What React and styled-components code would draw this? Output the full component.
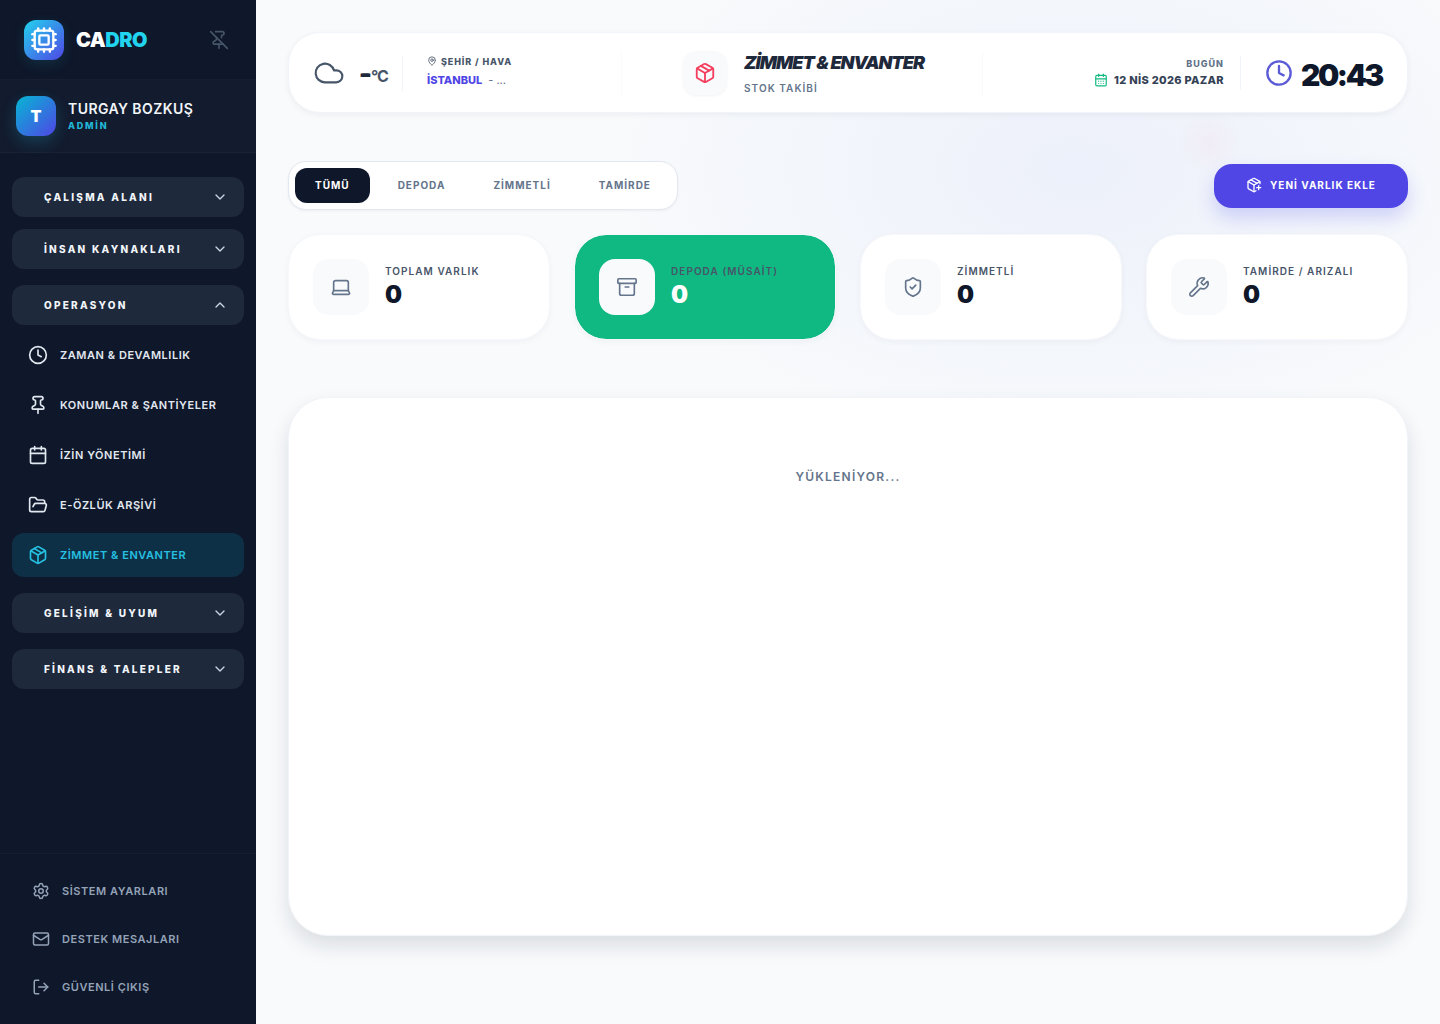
import React from 'react'
import styled, { createGlobalStyle } from 'styled-components'
import {
  Archive, Calendar, CalendarDays, ChevronDown, ChevronUp, Clock, Cloud, Cpu, FolderOpen, Laptop,
  LogOut, Mail, MapPin, Package, PackagePlus, Pin, PinOff, Settings, ShieldCheck, Wrench,
} from 'lucide-react'

const GlobalStyle = createGlobalStyle`
  * { box-sizing: border-box; }
  html, body { margin: 0; padding: 0; }
  body { font-family: Inter, "Noto Sans", sans-serif; background: #f8fafc; }
`

const opsItems = [
  { label: 'ZAMAN & DEVAMLILIK', icon: Clock },
  { label: 'KONUMLAR & ŞANTİYELER', icon: Pin },
  { label: 'İZİN YÖNETİMİ', icon: Calendar },
  { label: 'E-ÖZLÜK ARŞİVİ', icon: FolderOpen },
]

const footerItems = [
  { label: 'SİSTEM AYARLARI', icon: Settings },
  { label: 'DESTEK MESAJLARI', icon: Mail },
  { label: 'GÜVENLİ ÇIKIŞ', icon: LogOut },
]

const stats = [
  { label: 'TOPLAM VARLIK', icon: Laptop },
  { label: 'DEPODA (MÜSAİT)', icon: Archive, active: true },
  { label: 'ZİMMETLİ', icon: ShieldCheck },
  { label: 'TAMİRDE / ARIZALI', icon: Wrench },
]

const Group = ({ label, open }) => (
  <GroupButton>
    <span>{label}</span>
    {open ? <ChevronUp size={16} /> : <ChevronDown size={16} />}
  </GroupButton>
)

const App = () => (
  <Page>
    <GlobalStyle />
    <Sidebar>
      <Brand>
        <LogoBox><Cpu size={28} strokeWidth={2} /></LogoBox>
        <BrandName>CA<em>DRO</em></BrandName>
        <PinButton><PinOff size={20} /></PinButton>
      </Brand>
      <UserBox>
        <Avatar>T</Avatar>
        <div>
          <UserName>TURGAY BOZKUŞ</UserName>
          <UserRole>ADMİN</UserRole>
        </div>
      </UserBox>
      <Nav>
        <Group label="ÇALIŞMA ALANI" />
        <Group label="İNSAN KAYNAKLARI" />
        <OpenGroup>
          <Group label="OPERASYON" open />
          <SubList>
            {opsItems.map(({ label, icon: Icon }) => (
              <NavItem key={label}><Icon size={20} />{label}</NavItem>
            ))}
            <NavItem active><Package size={20} />ZİMMET & ENVANTER</NavItem>
          </SubList>
        </OpenGroup>
        <Group label="GELİŞİM & UYUM" />
        <LastGroup><Group label="FİNANS & TALEPLER" /></LastGroup>
      </Nav>
      <SideFooter>
        {footerItems.map(({ label, icon: Icon }) => (
          <FooterItem key={label}><Icon size={18} />{label}</FooterItem>
        ))}
      </SideFooter>
    </Sidebar>

    <Main>
      <TopBar>
        <WeatherBlock>
          <Cloud size={32} strokeWidth={1.6} color="#475569" />
          <Temp><b>--</b>°C</Temp>
          <CityBox>
            <CityLabel><MapPin size={10} />ŞEHİR / HAVA</CityLabel>
            <CityValue><b>İSTANBUL</b><span>- ...</span></CityValue>
          </CityBox>
        </WeatherBlock>
        <TitleBlock>
          <TitleIcon><Package size={22} /></TitleIcon>
          <div>
            <PageTitle>ZİMMET & ENVANTER</PageTitle>
            <PageSub>STOK TAKİBİ</PageSub>
          </div>
        </TitleBlock>
        <DateBlock>
          <DateBox>
            <DateLabel>BUGÜN</DateLabel>
            <DateValue><CalendarDays size={14} color="#10b981" />12 NİS 2026 PAZAR</DateValue>
          </DateBox>
          <ClockBox>
            <Clock size={28} color="#5b5bd6" strokeWidth={2} />
            <Time>20:43</Time>
          </ClockBox>
        </DateBlock>
      </TopBar>

      <ToolRow>
        <Tabs>
          <Tab active>TÜMÜ</Tab>
          <Tab>DEPODA</Tab>
          <Tab>ZİMMETLİ</Tab>
          <Tab>TAMİRDE</Tab>
        </Tabs>
        <AddButton><PackagePlus size={16} />YENİ VARLIK EKLE</AddButton>
      </ToolRow>

      <StatGrid>
        {stats.map(({ label, icon: Icon, active }) => (
          <StatCard key={label} active={active}>
            <StatIcon><Icon size={22} strokeWidth={1.8} /></StatIcon>
            <StatText>
              <StatLabel>{label}</StatLabel>
              <StatValue active={active}>0</StatValue>
            </StatText>
          </StatCard>
        ))}
      </StatGrid>

      <Panel>YÜKLENİYOR...</Panel>
    </Main>
  </Page>
)

export default App

const Page = styled.div`
  display: flex;
  min-height: 1024px;
`

const Sidebar = styled.aside`
  width: 256px;
  flex-shrink: 0;
  height: 1024px;
  background: #0f172a;
  display: flex;
  flex-direction: column;
`

const Brand = styled.div`
  height: 80px;
  padding: 0 24px;
  display: flex;
  align-items: center;
  gap: 12px;
  border-bottom: 1px solid rgba(255, 255, 255, 0.03);
`

const LogoBox = styled.div`
  width: 40px;
  height: 40px;
  border-radius: 12px;
  color: #fff;
  background: linear-gradient(135deg, #22d3ee, #4f46e5);
  box-shadow: 0 4px 14px rgba(34, 211, 238, 0.12);
  display: flex;
  align-items: center;
  justify-content: center;
`

const BrandName = styled.div`
  font-size: 20px;
  font-weight: 900;
  letter-spacing: -0.5px;
  color: #fff;

  em {
    font-style: normal;
    color: #22d3ee;
  }
`

const PinButton = styled.div`
  margin-left: auto;
  margin-right: 3px;
  color: #475569;
  display: flex;
`

const UserBox = styled.div`
  height: 73px;
  padding: 0 16px;
  display: flex;
  align-items: center;
  gap: 12px;
  background: rgba(255, 255, 255, 0.02);
  border-bottom: 1px solid rgba(255, 255, 255, 0.03);
`

const Avatar = styled.div`
  width: 40px;
  height: 40px;
  border-radius: 12px;
  color: #fff;
  font-size: 16px;
  font-weight: 900;
  background: linear-gradient(135deg, #06b6d4, #4f46e5);
  box-shadow: 0 6px 16px rgba(34, 211, 238, 0.2);
  display: flex;
  align-items: center;
  justify-content: center;
`

const UserName = styled.div`
  margin-top: 1px;
  font-size: 14px;
  font-weight: 600;
  letter-spacing: 0.42px;
  color: #f1f5f9;
  line-height: 18px;
`

const UserRole = styled.div`
  margin-top: 1px;
  font-size: 9px;
  font-weight: 800;
  letter-spacing: 1.8px;
  color: #22b8d8;
  line-height: 14px;
`

const Nav = styled.nav`
  padding: 24px 12px 0;
  display: flex;
  flex-direction: column;
  gap: 12px;
`

const GroupButton = styled.div`
  height: 40px;
  padding: 0 16px 0 32px;
  border-radius: 12px;
  background: #1e293b;
  color: #f1f5f9;
  font-size: 10px;
  font-weight: 800;
  letter-spacing: 2.25px;
  display: flex;
  align-items: center;
  justify-content: space-between;

  svg {
    color: #cbd5e1;
  }
`

const OpenGroup = styled.div`
  margin-top: 4px;
`

const LastGroup = styled.div`
  margin-top: 4px;
`

const SubList = styled.div`
  padding-top: 8px;
  padding-bottom: 4px;
  display: flex;
  flex-direction: column;
  gap: 6px;
`

const NavItem = styled.div`
  height: 44px;
  padding: 0 16px;
  border-radius: 12px;
  font-size: 11px;
  font-weight: 600;
  letter-spacing: 0.55px;
  color: ${(props) => (props.active ? '#26c0e2' : '#e2e8f0')};
  background: ${(props) => (props.active ? 'rgba(14, 116, 144, 0.28)' : 'transparent')};
  display: flex;
  align-items: center;
  gap: 12px;
`

const SideFooter = styled.div`
  margin-top: auto;
  padding: 13px 12px 13px;
  border-top: 1px solid rgba(255, 255, 255, 0.03);
  display: flex;
  flex-direction: column;
`

const FooterItem = styled.div`
  height: 48px;
  padding: 0 20px;
  font-size: 11px;
  font-weight: 600;
  letter-spacing: 0.55px;
  color: #94a3b8;
  display: flex;
  align-items: center;
  gap: 12px;
`

const Main = styled.main`
  flex: 1;
  min-width: 0;
  height: 1024px;
  overflow: hidden;
  padding: 32px;
  background:
    radial-gradient(circle at 954px 142px, rgba(244, 190, 215, 0.14), transparent 32px),
    radial-gradient(ellipse 460px 280px at 820px 170px, rgba(203, 213, 245, 0.26), transparent 100%),
    #f8fafc;
`

const TopBar = styled.header`
  height: 81px;
  background: #fff;
  border: 1px solid #f1f5f9;
  border-radius: 32px;
  box-shadow: 0 2px 6px rgba(15, 23, 42, 0.05);
  display: flex;
  align-items: center;
`

const WeatherBlock = styled.div`
  width: 333px;
  height: 44px;
  padding-left: 24px;
  border-right: 1px solid #f8fafc;
  display: flex;
  align-items: center;
`

const Temp = styled.div`
  margin-left: 14px;
  width: 44px;
  height: 36px;
  line-height: 42px;
  font-size: 16px;
  font-weight: 700;
  letter-spacing: -1px;
  color: #475569;
  border-right: 1px solid #f1f5f9;

  b {
    display: inline-block;
    width: 12px;
    font-size: 24px;
    line-height: 36px;
    font-weight: 900;
    letter-spacing: -10px;
    color: #1e293b;
  }
`

const CityBox = styled.div`
  margin-left: 24px;
  margin-top: -3px;
`

const CityLabel = styled.div`
  font-size: 9px;
  font-weight: 800;
  letter-spacing: 0.9px;
  color: #475569;
  display: flex;
  align-items: center;
  gap: 4px;
`

const CityValue = styled.div`
  margin-top: 6px;
  font-size: 11px;
  display: flex;
  gap: 6px;
  color: #64748b;

  b {
    font-weight: 800;
    color: #4f46e5;
  }
`

const TitleBlock = styled.div`
  flex: 1;
  height: 44px;
  padding-left: 3px;
  border-right: 1px solid #f8fafc;
  display: flex;
  align-items: center;
  justify-content: center;
  gap: 17px;
`

const TitleIcon = styled.div`
  width: 44px;
  height: 44px;
  border-radius: 14px;
  color: #f43f5e;
  background: #f8fafc;
  box-shadow: 0 1px 3px rgba(15, 23, 42, 0.05);
  display: flex;
  align-items: center;
  justify-content: center;
`

const PageTitle = styled.h1`
  margin: 0;
  font-size: 18px;
  line-height: 22px;
  font-weight: 900;
  font-style: italic;
  letter-spacing: -1px;
  color: #1e293b;
`

const PageSub = styled.div`
  margin-top: 8px;
  font-size: 10px;
  font-weight: 600;
  letter-spacing: 1.05px;
  color: #64748b;
`

const DateBlock = styled.div`
  width: 424px;
  padding-right: 25px;
  display: flex;
  align-items: center;
  justify-content: flex-end;
`

const DateBox = styled.div`
  padding-right: 16px;
  padding-top: 2px;
  height: 34px;
  border-right: 1px solid #f1f5f9;
  text-align: right;
`

const DateLabel = styled.div`
  font-size: 9px;
  font-weight: 800;
  letter-spacing: 1px;
  color: #64748b;
`

const DateValue = styled.div`
  margin-top: 4px;
  font-size: 11px;
  font-weight: 800;
  letter-spacing: 0.3px;
  color: #334155;
  display: flex;
  align-items: center;
  gap: 6px;
`

const ClockBox = styled.div`
  margin-left: 24px;
  display: flex;
  align-items: center;
  gap: 8px;
`

const Time = styled.div`
  margin-top: 4px;
  font-size: 30px;
  font-weight: 900;
  letter-spacing: -2.4px;
  color: #0f172a;
`

const ToolRow = styled.div`
  margin-top: 48px;
  display: flex;
  align-items: center;
  justify-content: space-between;
`

const Tabs = styled.div`
  height: 49px;
  padding: 6px;
  border: 1px solid #e2e8f0;
  border-radius: 18px;
  background: #fff;
  box-shadow: 0 1px 3px rgba(15, 23, 42, 0.05);
  display: flex;
  gap: 8px;
`

const Tab = styled.div`
  height: 35px;
  padding: 0 20px 1px;
  border-radius: 12px;
  font-size: 10px;
  font-weight: 700;
  letter-spacing: 1px;
  color: ${(props) => (props.active ? '#fff' : '#64748b')};
  background: ${(props) => (props.active ? '#0f172a' : 'transparent')};
  display: flex;
  align-items: center;
`

const AddButton = styled.div`
  width: 194px;
  height: 44px;
  padding-bottom: 1px;
  border-radius: 18px;
  background: #4f46e5;
  color: #fff;
  font-size: 10px;
  font-weight: 700;
  letter-spacing: 1px;
  box-shadow: 0 10px 18px rgba(99, 102, 241, 0.25);
  display: flex;
  align-items: center;
  justify-content: center;
  gap: 8px;
`

const StatGrid = styled.div`
  margin-top: 24px;
  display: grid;
  grid-template-columns: repeat(4, 1fr);
  gap: 24px;
`

const StatCard = styled.div`
  height: 106px;
  padding: 0 24px;
  border-radius: 32px;
  border: 1px solid #f6f8fb;
  background: ${(props) => (props.active ? '#10b981' : '#fff')};
  background-clip: padding-box;
  box-shadow: 0 2px 6px rgba(15, 23, 42, 0.04);
  display: flex;
  align-items: center;
  gap: 16px;
`

const StatIcon = styled.div`
  width: 56px;
  height: 56px;
  border-radius: 16px;
  background: #f8fafc;
  color: #64748b;
  display: flex;
  align-items: center;
  justify-content: center;
`

const StatText = styled.div`
  margin-top: -1px;
`

const StatLabel = styled.div`
  font-size: 10px;
  font-weight: 600;
  letter-spacing: 1.05px;
  color: #475569;
`

const StatValue = styled.div`
  margin-top: 4px;
  font-size: 24px;
  line-height: 28px;
  font-weight: 900;
  color: ${(props) => (props.active ? '#fff' : '#0f172a')};
`

const Panel = styled.section`
  margin-top: 57px;
  height: 539px;
  padding-top: 71px;
  border: 1px solid #f1f5f9;
  border-radius: 40px;
  background: #fff;
  box-shadow: 0 10px 20px rgba(15, 23, 42, 0.12);
  text-align: center;
  font-size: 12px;
  font-weight: 600;
  letter-spacing: 1.25px;
  color: #64748b;
`
